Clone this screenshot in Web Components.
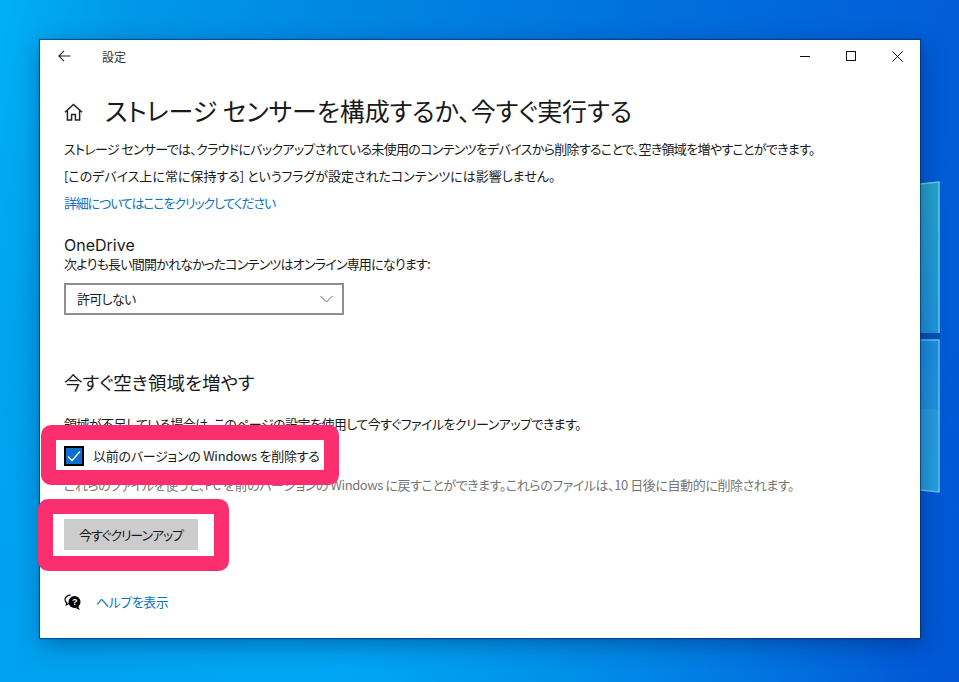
<!DOCTYPE html>
<html lang="ja">
<head>
<meta charset="utf-8">
<title>設定</title>
<style>
  html, body { margin: 0; height: 100%; }
  body { font-family: "Noto Sans CJK JP", "Noto Sans", sans-serif; overflow: hidden; }
</style>
</head>
<body>
<desktop-backdrop>
  <settings-window caption="設定">
    <page-heading>ストレージ センサーを構成するか、今すぐ実行する</page-heading>
    <body-line top="12" style="letter-spacing:-.68px">ストレージ センサーでは、クラウドにバックアップされている未使用のコンテンツをデバイスから削除することで、空き領域を増やすことができます。</body-line>
    <body-line top="9">[このデバイス上に常に保持する] というフラグが設定されたコンテンツには影響しません。</body-line>
    <link-line top="9" style="letter-spacing:-1.15px">詳細についてはここをクリックしてください</link-line>
    <section-title top="23" size="16" style="font-family:Inter,sans-serif">OneDrive</section-title>
    <body-line top="0" style="letter-spacing:-.78px">次よりも長い間開かれなかったコンテンツはオンライン専用になります:</body-line>
    <combo-box>許可しない</combo-box>
    <section-title top="57" size="18.5">今すぐ空き領域を増やす</section-title>
    <body-line top="23" style="letter-spacing:-.55px">領域が不足している場合は、このページの設定を使用して今すぐファイルをクリーンアップできます。</body-line>
    <highlight-frame style="margin:7px 0 0 -8px">
      <check-box>以前のバージョンの Windows を削除する</check-box>
    </highlight-frame>
    <body-line top="6" muted style="letter-spacing:-.42px">これらのファイルを使うと、PC を前のバージョンの Windows に戻すことができます。これらのファイルは、10 日後に自動的に削除されます。</body-line>
    <highlight-frame style="margin:20px 0 0 -11px">
      <action-button>今すぐクリーンアップ</action-button>
    </highlight-frame>
    <help-link>ヘルプを表示</help-link>
  </settings-window>
</desktop-backdrop>

<script>
const fontStack = '"Noto Sans CJK JP", "Noto Sans", sans-serif';

class DesktopBackdrop extends HTMLElement {
  connectedCallback() {
    this.attachShadow({ mode: 'open' });
    this.shadowRoot.innerHTML = `
      <style>
        :host {
          display: block;
          position: relative;
          width: 959px;
          height: 682px;
          box-sizing: border-box;
          padding: 40px 39px 44px 40px;
          overflow: hidden;
          background:
            radial-gradient(ellipse 620px 420px at 300px 720px, #00aaf5 0%, rgba(0,170,245,0) 100%),
            linear-gradient(100deg, #00b0f6 0%, #0098e8 12%, #0070dc 60%, #0256d6 100%);
        }
        .logo { position: absolute; left: 900px; top: 170px; width: 59px; height: 340px; }
      </style>
      <svg class="logo" viewBox="0 0 59 340">
        <defs>
          <linearGradient id="pa" x1="0" y1="0" x2="0" y2="1"><stop offset="0" stop-color="#25a5cc"/><stop offset="1" stop-color="#1f95de"/></linearGradient>
          <linearGradient id="pb" x1="0" y1="0" x2="0" y2="1"><stop offset="0" stop-color="#1c8fe0"/><stop offset=".45" stop-color="#1f94e0"/><stop offset=".46" stop-color="#269ee2"/><stop offset="1" stop-color="#25a0e0"/></linearGradient>
        </defs>
        <rect x="20" y="163" width="20" height="7" fill="#0a50b8"/>
        <path d="M0 15 39 12V163H0z" fill="url(#pa)"/>
        <path d="M0 170H39V322L0 318z" fill="url(#pb)"/>
        <path d="M20 14 39 12V163" fill="none" stroke="#5ed0e4" stroke-width="1.5"/>
        <path d="M20 170H39V322L20 320" fill="none" stroke="#5cc8ec" stroke-width="1.5"/>
      </svg>
      <slot></slot>
    `;
  }
}

class SettingsWindow extends HTMLElement {
  connectedCallback() {
    this.attachShadow({ mode: 'open' });
    this.shadowRoot.innerHTML = `
      <style>
        :host {
          display: flex;
          flex-direction: column;
          position: relative;
          height: 100%;
          background: #fff;
          box-shadow: 0 0 1px 1px rgba(0,40,90,.55), 2px 6px 22px rgba(0,20,70,.38);
          font-family: ${fontStack};
          font-feature-settings: "palt";
          color: #1a1a1a;
        }
        .bar {
          display: flex;
          align-items: center;
          height: 32px;
          padding-left: 18px;
          flex: none;
        }
        .back { width: 13px; height: 12px; }
        .caption { margin-left: 31px; font-size: 12px; color: #333; }
        .controls { display: flex; margin-left: auto; margin-right: 17px; gap: 35px; align-items: center; }
        .controls svg { width: 11px; height: 11px; display: block; }
        .content {
          display: flex;
          flex-direction: column;
          align-items: flex-start;
          padding: 0 24px;
          flex: 1;
        }
      </style>
      <div class="bar">
        <svg class="back" viewBox="0 0 13 12" fill="none" stroke="#222" stroke-width="1.1"><path d="M12.5 6H1M6 .8 .9 6l5.1 5.2"/></svg>
        <span class="caption">${this.getAttribute('caption')}</span>
        <div class="controls">
          <svg viewBox="0 0 11 11" fill="none" stroke="#111"><path d="M0 5.5h10"/></svg>
          <svg viewBox="0 0 11 11" fill="none" stroke="#111"><rect x=".5" y=".5" width="9" height="9"/></svg>
          <svg viewBox="0 0 11 11" fill="none" stroke="#111"><path d="M.4.4l10.2 10.2M10.6.4.4 10.6"/></svg>
        </div>
      </div>
      <div class="content"><slot></slot></div>
    `;
  }
}

class PageHeading extends HTMLElement {
  connectedCallback() {
    this.attachShadow({ mode: 'open' });
    this.shadowRoot.innerHTML = `
      <style>
        :host { display: flex; align-items: center; height: 36px; margin-top: 20px; }
        svg { width: 19px; height: 18px; margin-right: 22px; flex: none; margin-top: 3px; }
        h1 { margin: 0; font-size: 25px; letter-spacing: -.04px; font-weight: 400; line-height: 36px; color: #1a1a1a; white-space: nowrap; }
      </style>
      <svg viewBox="0 0 19 18" fill="none" stroke="#222" stroke-width="1.5">
        <path d="M1 9.2 9.5 1.4 18 9.2M3.4 7.4V17h4.2v-5.4h3.8V17h4.2V7.4"/>
      </svg>
      <h1><slot></slot></h1>
    `;
  }
}

class BodyLine extends HTMLElement {
  connectedCallback() {
    this.attachShadow({ mode: 'open' });
    const top = this.getAttribute('top') || 0;
    this.shadowRoot.innerHTML = `
      <style>
        :host { display: block; margin-top: ${top}px; font-size: 13px; line-height: 18px; white-space: nowrap; color: #1a1a1a; }
        :host([muted]) { color: #767676; }
      </style>
      <slot></slot>
    `;
  }
}

class LinkLine extends HTMLElement {
  connectedCallback() {
    this.attachShadow({ mode: 'open' });
    const top = this.getAttribute('top') || 0;
    this.shadowRoot.innerHTML = `
      <style>
        :host { display: block; margin-top: ${top}px; font-size: 13px; line-height: 18px; color: #0a74bd; white-space: nowrap; }
      </style>
      <slot></slot>
    `;
  }
}

class SectionTitle extends HTMLElement {
  connectedCallback() {
    this.attachShadow({ mode: 'open' });
    const top = this.getAttribute('top') || 0;
    const size = this.getAttribute('size') || 16;
    this.shadowRoot.innerHTML = `
      <style>
        :host { display: block; margin-top: ${top}px; font-size: ${size}px; line-height: 20px; color: #1a1a1a; white-space: nowrap; }
      </style>
      <slot></slot>
    `;
  }
}

class ComboBox extends HTMLElement {
  connectedCallback() {
    this.attachShadow({ mode: 'open' });
    this.shadowRoot.innerHTML = `
      <style>
        :host {
          display: flex;
          align-items: center;
          justify-content: space-between;
          box-sizing: border-box;
          width: 280px;
          height: 32px;
          margin-top: 10px;
          padding: 0 9px 0 11px;
          border: 2px solid #8f8f8f;
          font-size: 13px;
          letter-spacing: -.7px;
          color: #1a1a1a;
        }
        span { margin-top: -2px; }
        svg { width: 13px; height: 8px; }
      </style>
      <span><slot></slot></span>
      <svg viewBox="0 0 13 8" fill="none" stroke="#666"><path d="M.5 1 6.5 7l6-6"/></svg>
    `;
  }
}

class HighlightFrame extends HTMLElement {
  connectedCallback() {
    this.attachShadow({ mode: 'open' });
    this.shadowRoot.innerHTML = `
      <style>
        :host { display: block; position: relative; }
        .mark {
          position: absolute;
          inset: -15px;
          border: 15px solid #fb2f70;
          border-radius: 10px;
          pointer-events: none;
        }
      </style>
      <slot></slot>
      <div class="mark"></div>
    `;
  }
}

class CheckBox extends HTMLElement {
  connectedCallback() {
    this.attachShadow({ mode: 'open' });
    this.shadowRoot.innerHTML = `
      <style>
        :host {
          display: flex;
          align-items: center;
          box-sizing: border-box;
          width: 268px;
          height: 30px;
          padding-left: 8px;
          font-size: 13px;
          letter-spacing: -.25px;
          color: #1a1a1a;
          white-space: nowrap;
        }
        svg { width: 20px; height: 20px; margin: 2px 9px 0 0; flex: none; }
      </style>
      <svg viewBox="0 0 20 20">
        <rect width="20" height="20" fill="#000"/>
        <rect x="2" y="2" width="16" height="16" fill="#0a6fd0"/>
        <path d="M4 10.5 8 14.5 16 5.5" fill="none" stroke="#fff" stroke-width="1.4"/>
      </svg>
      <span><slot></slot></span>
    `;
  }
}

class ActionButton extends HTMLElement {
  connectedCallback() {
    this.attachShadow({ mode: 'open' });
    this.shadowRoot.innerHTML = `
      <style>
        :host { display: block; padding: 5px 16px 6px 11px; width: 134px; box-sizing: content-box; }
        button {
          display: block;
          width: 134px;
          height: 31px;
          border: 0;
          padding: 0;
          background: #cccccc;
          color: #1a1a1a;
          font: 13px ${fontStack};
          font-feature-settings: "palt";
          letter-spacing: -1.1px;
        }
      </style>
      <button><slot></slot></button>
    `;
  }
}

class HelpLink extends HTMLElement {
  connectedCallback() {
    this.attachShadow({ mode: 'open' });
    this.shadowRoot.innerHTML = `
      <style>
        :host { display: flex; align-items: center; margin-top: 36px; font-size: 13px; letter-spacing: -.5px; color: #0a74bd; white-space: nowrap; line-height: 20px; }
        svg { width: 17px; height: 17px; margin-right: 15px; flex: none; }
      </style>
      <svg viewBox="0 0 17 17">
        <path d="M6.5 1.2C3.4 1.2 1 3 1 5.5c0 1.3.7 2.4 1.8 3.2L2.4 10.8 5 9.5" fill="none" stroke="#111" stroke-width="1.3"/>
        <circle cx="10.5" cy="8" r="6" fill="#000"/>
        <path d="M14 12.5 16 16 11.5 14z" fill="#000"/>
        <text x="10.5" y="11" font-size="9" font-weight="700" text-anchor="middle" fill="#fff" font-family="Liberation Sans">?</text>
      </svg>
      <span><slot></slot></span>
    `;
  }
}

customElements.define('desktop-backdrop', DesktopBackdrop);
customElements.define('settings-window', SettingsWindow);
customElements.define('page-heading', PageHeading);
customElements.define('body-line', BodyLine);
customElements.define('link-line', LinkLine);
customElements.define('section-title', SectionTitle);
customElements.define('combo-box', ComboBox);
customElements.define('highlight-frame', HighlightFrame);
customElements.define('check-box', CheckBox);
customElements.define('action-button', ActionButton);
customElements.define('help-link', HelpLink);
</script>
</body>
</html>
